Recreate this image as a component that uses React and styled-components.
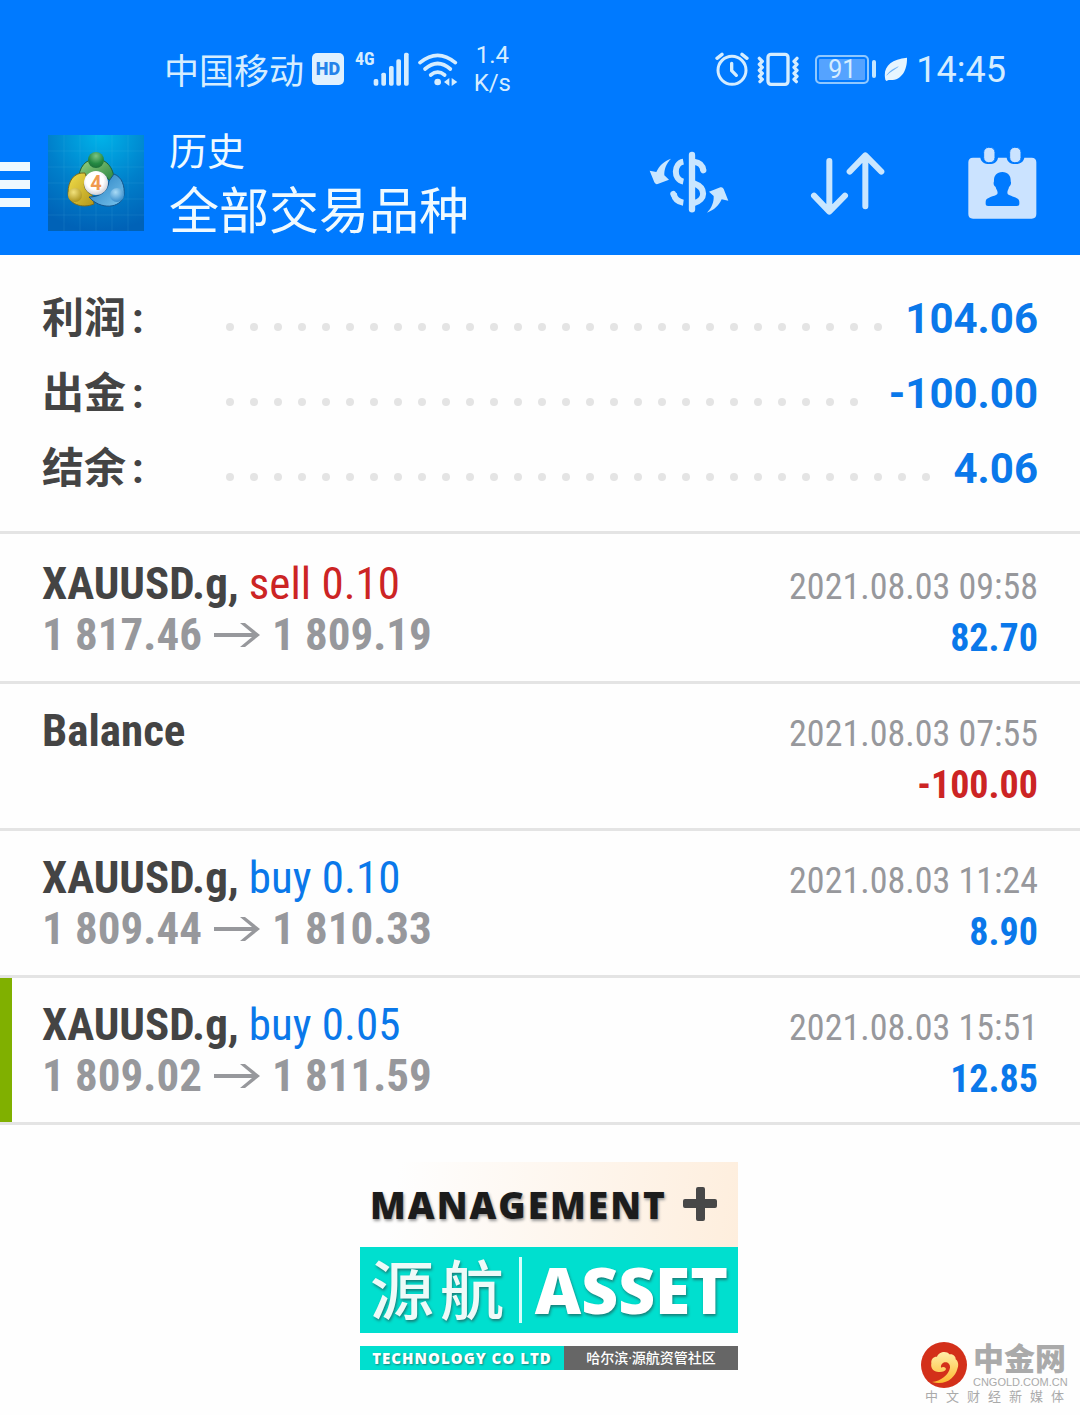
import React from 'react'
import styled, { createGlobalStyle } from 'styled-components'

const summary = [
	{ label: '利润', value: '104.06' },
	{ label: '出金', value: '-100.00' },
	{ label: '结余', value: '4.06' },
]

const deals = [
	{ symbol: 'XAUUSD.g,', type: 'sell', lots: '0.10', open: '1 817.46', close: '1 809.19', time: '2021.08.03 09:58', profit: '82.70' },
	{ symbol: 'Balance', time: '2021.08.03 07:55', profit: '-100.00' },
	{ symbol: 'XAUUSD.g,', type: 'buy', lots: '0.10', open: '1 809.44', close: '1 810.33', time: '2021.08.03 11:24', profit: '8.90' },
	{ symbol: 'XAUUSD.g,', type: 'buy', lots: '0.05', open: '1 809.02', close: '1 811.59', time: '2021.08.03 15:51', profit: '12.85', marked: true },
]

const SignalIcon = () => (
	<svg width="36" height="34" viewBox="668 62 108 102" fill="#d5edff">
		<rect x="670" y="143" width="14" height="20" rx="5" />
		<rect x="693" y="124" width="14" height="39" rx="5" />
		<rect x="716" y="104" width="14" height="59" rx="5" />
		<rect x="738" y="84" width="14" height="79" rx="5" />
		<rect x="761" y="64" width="14" height="99" rx="5" />
	</svg>
)

const WifiIcon = () => (
	<svg width="41" height="34" viewBox="800 60 123 102" fill="none" stroke="#d5edff" strokeWidth="11" strokeLinecap="round">
		<path d="M809 92Q862 48 915 92" />
		<path d="M824 111Q862 78 900 111" />
		<path d="M841 129Q862 112 883 129" />
		<circle cx="862" cy="150" r="10" fill="#d5edff" stroke="none" />
		<path d="M897 138v24l-16-12zM904 138v24l17-12z" fill="#d5edff" stroke="none" />
	</svg>
)

const AlarmIcon = () => (
	<svg width="34" height="34" viewBox="44 64 102 102" fill="none" stroke="#d5edff" strokeWidth="9" strokeLinecap="round">
		<circle cx="95" cy="119" r="42" />
		<path d="M94 98v22l14 14" strokeWidth="10" />
		<path d="M50 83l15-12M140 83l-15-12" strokeWidth="10" />
	</svg>
)

const VibrateIcon = () => (
	<svg width="42" height="34" viewBox="180 64 126 102" fill="none" stroke="#d5edff" strokeWidth="10" strokeLinejoin="round" strokeLinecap="round">
		<rect x="213" y="71" width="60" height="90" rx="9" />
		<path d="M187 83l9 9-9 9 9 9-9 9 9 9-9 9 9 9-7 7" />
		<path d="M300 83l-9 9 9 9-9 9 9 9-9 9 9 9-9 9 7 7" />
	</svg>
)

const LeafIcon = () => (
	<svg width="24" height="26" viewBox="0 0 72 78">
		<path d="M4 71C-4 34 18 10 69 5C70 42 53 76 14 72L7 75Z" fill="#e6f5ff" />
		<path d="M8 58C17 44 30 37 43 32C32 41 19 46 8 58Z" fill="#5da9f5" stroke="#5da9f5" />
	</svg>
)

const CurrencyIcon = () => (
	<svg width="80" height="64" viewBox="60 60 240 192" fill="none" stroke="#c9e6ff" strokeWidth="18">
		<path d="M189 72V235" strokeLinecap="round" strokeWidth="19" />
		<path d="M163 92C134 97 132 146 163 152" />
		<path d="M134 188C137 204 148 213 163 215" />
		<path d="M133 189l1 2" strokeLinecap="round" />
		<path d="M195 92C212 94 221 103 223 118" />
		<path d="M222 116l1 2" strokeLinecap="round" />
		<path d="M195 157C232 170 231 207 195 216" />
		<g fill="#c9e6ff" stroke="none">
			<path d="M126 83C112 97 105 115 106 133L120 146L86 159Q79 161 76 154L62 119L82 123C90 105 105 90 126 83Z" />
			<path d="M126 83C112 97 105 115 106 133L120 146L86 159Q79 161 76 154L62 119L82 123C90 105 105 90 126 83Z" transform="rotate(180 180 164)" />
		</g>
	</svg>
)

const SortIcon = () => (
	<svg width="80" height="64" viewBox="530 60 240 192" fill="none" stroke="#c9e6ff" strokeWidth="18" strokeLinecap="round" strokeLinejoin="round">
		<path d="M594 90V241M548 194L594 242L641 194" />
		<path d="M702 226V74M655 122L702 73L750 122" />
	</svg>
)

const CalendarIcon = () => (
	<svg width="71" height="72" viewBox="1010 48 213 216">
		<path d="M1028 80H1050C1052 92 1062 99 1077 99C1092 99 1101 92 1103 80H1129C1131 92 1140 99 1155 99C1170 99 1180 92 1182 80H1204Q1218 80 1218 94V249Q1218 263 1204 263H1028Q1014 263 1014 249V94Q1014 80 1028 80Z" fill="#cbe3ff" />
		<rect x="1060" y="49" width="34" height="46" rx="15" fill="#cbe3ff" stroke="#007aff" strokeWidth="3" />
		<rect x="1138" y="49" width="34" height="46" rx="15" fill="#cbe3ff" stroke="#007aff" strokeWidth="3" />
		<path d="M1116 123C1134 123 1142 135 1141 151C1144 158 1140 165 1136 168C1135 176 1129 179 1132 189C1140 197 1167 198 1167 212V220Q1167 225 1160 225H1073Q1066 225 1066 220V212C1066 198 1093 197 1101 189C1104 179 1097 176 1096 168C1091 165 1088 158 1091 151C1090 135 1098 123 1116 123Z" fill="#007aff" />
	</svg>
)

const AppLogo = () => (
	<svg width="96" height="96" viewBox="0 0 96 96">
		<defs>
			<radialGradient id="sky" cx=".55" cy="0" r="1">
				<stop offset="0" stopColor="#00b4ea" />
				<stop offset=".55" stopColor="#0080cb" />
				<stop offset="1" stopColor="#0062b7" />
			</radialGradient>
			<linearGradient id="green" x1="0" y1="0" x2="1" y2="1">
				<stop offset="0" stopColor="#9bd486" />
				<stop offset="1" stopColor="#23813b" />
			</linearGradient>
			<linearGradient id="gold" x1="0" y1="0" x2="1" y2="1">
				<stop offset="0" stopColor="#f3df4b" />
				<stop offset="1" stopColor="#b3961a" />
			</linearGradient>
			<linearGradient id="azure" x1="0" y1="0" x2="1" y2="1">
				<stop offset="0" stopColor="#1d78bd" />
				<stop offset="1" stopColor="#7cc6ee" />
			</linearGradient>
			<radialGradient id="greenHead" cx=".5" cy=".25" r=".8">
				<stop offset="0" stopColor="#7cc482" />
				<stop offset=".6" stopColor="#248a43" />
				<stop offset="1" stopColor="#1b6a35" />
			</radialGradient>
			<radialGradient id="goldHead" cx=".4" cy=".3" r=".8">
				<stop offset="0" stopColor="#f2e27c" />
				<stop offset="1" stopColor="#a58a10" />
			</radialGradient>
			<radialGradient id="azureHead" cx=".4" cy=".3" r=".8">
				<stop offset="0" stopColor="#a9dbf6" />
				<stop offset="1" stopColor="#2a83c6" />
			</radialGradient>
			<radialGradient id="ball" cx=".45" cy=".4" r=".6">
				<stop offset=".6" stopColor="#fff" />
				<stop offset="1" stopColor="#cfcfd6" />
			</radialGradient>
		</defs>
		<rect width="96" height="96" fill="url(#sky)" />
		<path d="M0 16H96M0 32H96M0 48H96M0 64H96M0 80H96M16 0V96M32 0V96M48 0V96M64 0V96M80 0V96" stroke="#6cc6f2" strokeOpacity=".12" />
		<path d="M31 46C30 32 38 24 48 24C59 24 67 34 66 48L60 44C56 36 40 36 36 44Z" fill="url(#green)" stroke="#1f5f35" />
		<path d="M37 38C26 37 20 46 20 58C20 69 34 74 46 69L44 60C36 56 34 48 39 44Z" fill="url(#gold)" stroke="#7c6c1c" />
		<path d="M66 39C74 42 77 51 76 60C73 74 52 75 41 62C50 62 60 58 61 46Z" fill="url(#azure)" stroke="#15558b" />
		<circle cx="48" cy="25" r="8" fill="url(#greenHead)" />
		<circle cx="27" cy="60" r="7" fill="url(#goldHead)" />
		<circle cx="69" cy="60" r="7" fill="url(#azureHead)" />
		<circle cx="48" cy="48" r="12" fill="url(#ball)" />
		<text x="48" y="55" textAnchor="middle" fontFamily="Roboto, sans-serif" fontWeight="700" fontSize="20" fill="#f09a4e">4</text>
	</svg>
)

const CloudLogo = () => (
	<svg width="46" height="46" viewBox="15 13 138 138">
		<defs>
			<linearGradient id="flame" x1="0" y1="0" x2="0" y2="1">
				<stop offset="0" stopColor="#ffefaa" />
				<stop offset="1" stopColor="#fdb930" />
			</linearGradient>
		</defs>
		<circle cx="84" cy="82" r="69" fill="#d3301a" />
		<path d="M48 133C74 130 98 112 102 90C103 77 92 71 82 75C76 78 74 84 75 90C80 86 89 87 90 94C89 101 78 104 68 103C53 103 43 92 46 77C44 64 54 56 63 57C68 41 93 38 100 50C112 48 120 57 119 65C127 71 129 83 124 94C118 118 90 146 48 133Z" fill="url(#flame)" />
	</svg>
)

const ArrowIcon = () => (
	<svg width="46" height="26" viewBox="0 0 46 26">
		<path d="M0 11H38L26 1H31L46 13L31 25H26L38 15H0Z" fill="#97989c" />
	</svg>
)

const App = () => (
	<Page>
		<GlobalStyle />
		<Header>
			<StatusBar>
				<StatusGroup>
					<Carrier>中国移动</Carrier>
					<HdBadge>HD</HdBadge>
					<Network>4G</Network>
					<SignalIcon />
					<WifiIcon />
					<Speed>
						<span>1.4</span>
						<span>K/s</span>
					</Speed>
				</StatusGroup>
				<StatusGroup>
					<AlarmIcon />
					<VibrateIcon />
					<Battery>
						<Charge>91</Charge>
					</Battery>
					<LeafIcon />
					<Clock>14:45</Clock>
				</StatusGroup>
			</StatusBar>
			<Toolbar>
				<MenuButton aria-label="菜单">
					<MenuLine />
					<MenuLine />
					<MenuLine />
				</MenuButton>
				<AppLogo />
				<Titles>
					<Subtitle>历史</Subtitle>
					<Title>全部交易品种</Title>
				</Titles>
				<Actions>
					<IconButton aria-label="货币"><CurrencyIcon /></IconButton>
					<IconButton aria-label="排序"><SortIcon /></IconButton>
					<IconButton aria-label="日期"><CalendarIcon /></IconButton>
				</Actions>
			</Toolbar>
		</Header>
		<Summary>
			{summary.map(({ label, value }) => (
				<SummaryRow key={label}>
					<Label>{label}<span>:</span></Label>
					<Dots aria-hidden="true">
						{Array.from({ length: 80 }, (_, i) => <Dot key={i} />)}
					</Dots>
					<Amount>{value}</Amount>
				</SummaryRow>
			))}
		</Summary>
		<Deals>
			{deals.map((deal) => (
				<Deal key={deal.time} $marked={deal.marked}>
					<div>
						<DealTitle>
							<span>{deal.symbol}</span>
							{deal.type && <Side $type={deal.type}>{deal.type} {deal.lots}</Side>}
						</DealTitle>
						{deal.open && (
							<Prices>
								<span>{deal.open}</span>
								<ArrowIcon />
								<span>{deal.close}</span>
							</Prices>
						)}
					</div>
					<DealInfo>
						<Time>{deal.time}</Time>
						<Profit $loss={deal.profit.startsWith('-')}>{deal.profit}</Profit>
					</DealInfo>
				</Deal>
			))}
		</Deals>
		<Footer>
			<Banner>
				<BannerTop>
					MANAGEMENT
					<svg width="38" height="38" viewBox="0 0 38 38">
						<path d="M14 3Q14 1 16 1H21Q23 1 23 3V13H33Q35 13 35 15V20Q35 22 33 22H23V33Q23 35 21 35H16Q14 35 14 33V22H3Q1 22 1 20V15Q1 13 3 13H14Z" fill="#484848" />
					</svg>
				</BannerTop>
				<BannerMain>
					<BrandName>源航</BrandName>
					<BrandAsset>ASSET</BrandAsset>
				</BannerMain>
				<BannerBottom>
					<Company>TECHNOLOGY CO LTD</Company>
					<Community>哈尔滨·源航资管社区</Community>
				</BannerBottom>
			</Banner>
			<Watermark>
				<WatermarkTop>
					<CloudLogo />
					<div>
						<SiteName>中金网</SiteName>
						<SiteUrl>CNGOLD.COM.CN</SiteUrl>
					</div>
				</WatermarkTop>
				<Slogan>中文财经新媒体</Slogan>
			</Watermark>
		</Footer>
	</Page>
)

export default App

const GlobalStyle = createGlobalStyle`
	* {
		box-sizing: border-box;
	}
	body {
		margin: 0;
		background-color: #fefefe;
		font-family: Roboto, 'Noto Sans CJK SC', sans-serif;
	}
	svg {
		display: block;
		flex-shrink: 0;
	}
`

const Page = styled.div`
	min-height: 100vh;
`

const Header = styled.header`
	background-color: #007aff;
	color: #d5edff;
	padding: 30px 0 9px;
`

const StatusBar = styled.div`
	display: flex;
	justify-content: space-between;
	align-items: center;
	height: 78px;
	padding: 0 74px 0 164px;
`

const StatusGroup = styled.div`
	display: flex;
	align-items: center;
	gap: 8px;
`

const Carrier = styled.span`
	padding-top: 8px;
	font-size: 35px;
	line-height: 40px;
`

const HdBadge = styled.span`
	width: 32px;
	height: 32px;
	border-radius: 5px;
	background-color: #e0f1ff;
	color: #2583ea;
	font-size: 18px;
	font-weight: 900;
	line-height: 32px;
	text-align: center;
`

const Network = styled.span`
	margin: 0 -10px 0 3px;
	padding-bottom: 20px;
	font-family: 'Roboto Condensed', 'Liberation Sans Narrow', sans-serif;
	font-size: 18px;
	font-weight: 700;
	line-height: 20px;
`

const Speed = styled.span`
	display: flex;
	flex-direction: column;
	align-items: center;
	padding-left: 8px;
	font-size: 24px;
	line-height: 28px;
`

const Battery = styled.span`
	display: flex;
	align-items: center;
	margin-left: 8px;
	&::after {
		content: '';
		width: 4px;
		height: 18px;
		margin-left: 3px;
		border-radius: 2px;
		background-color: #c5e6ff;
	}
`

const Charge = styled.span`
	width: 54px;
	height: 29px;
	border: 2px solid #8fc8ff;
	border-radius: 5px;
	background-color: #55a3ff;
	box-shadow: inset 0 0 0 2px #007aff;
	font-size: 25px;
	line-height: 26px;
	text-align: center;
`

const Clock = styled.span`
	padding-top: 2px;
	font-size: 36px;
	line-height: 40px;
`

const Toolbar = styled.div`
	display: flex;
	align-items: center;
	padding: 12px 42px 0 0;
`

const MenuButton = styled.button`
	display: flex;
	flex-direction: column;
	gap: 9px;
	width: 48px;
	padding: 3px 0 0;
	border: 0;
	background: none;
`

const MenuLine = styled.span`
	width: 30px;
	height: 9px;
	background-color: #eef9ff;
`

const Titles = styled.div`
	flex: 1;
	padding: 6px 0 0 25px;
	color: #f0faff;
`

const Subtitle = styled.div`
	font-size: 38px;
	line-height: 52px;
`

const Title = styled.h1`
	margin: 0;
	font-size: 50px;
	font-weight: 400;
	line-height: 68px;
`

const Actions = styled.div`
	display: flex;
	align-items: center;
	gap: 79px;
`

const IconButton = styled.button`
	padding: 0;
	border: 0;
	background: none;
`

const Summary = styled.dl`
	margin: 0;
	padding: 26px 42px 25px;
	border-bottom: 3px solid #e4e4e4;
`

const SummaryRow = styled.div`
	display: flex;
	align-items: center;
	height: 75px;
`

const Label = styled.dt`
	display: flex;
	gap: 6px;
	width: 176px;
	color: #444;
	font-size: 42px;
	font-weight: 700;
	line-height: 50px;
`

const Dots = styled.dd`
	display: flex;
	flex: 1;
	flex-wrap: wrap;
	height: 8px;
	margin: 16px 8px 0 0;
	overflow: hidden;
`

const Dot = styled.span`
	width: 8px;
	height: 8px;
	margin: 0 8px;
	border-radius: 50%;
	background-color: #e4e4e4;
`

const Amount = styled.dd`
	margin: 0;
	color: #0a78ea;
	font-size: 42px;
	font-weight: 700;
	line-height: 50px;
`

const Deals = styled.ul`
	margin: 0;
	padding: 3px 0 0;
	list-style: none;
	font-family: 'Roboto Condensed', 'Liberation Sans Narrow', sans-serif;
`

const Deal = styled.li`
	display: flex;
	justify-content: space-between;
	height: 147px;
	padding: 21px 42px 0;
	border-bottom: 3px solid #e4e4e4;
	box-shadow: ${({ $marked }) => ($marked ? 'inset 12px 0 #80b000' : 'none')};
`

const DealTitle = styled.div`
	display: flex;
	gap: 10px;
	color: #444;
	font-size: 45px;
	font-weight: 700;
	line-height: 51px;
`

const Side = styled.span`
	color: ${({ $type }) => ($type === 'sell' ? '#cc2424' : '#0a78ea')};
	font-weight: 400;
`

const Prices = styled.div`
	display: flex;
	align-items: center;
	gap: 12px;
	color: #97989c;
	font-size: 45px;
	font-weight: 700;
	line-height: 51px;
`

const DealInfo = styled.div`
	padding-top: 4px;
	text-align: right;
	line-height: 51px;
`

const Time = styled.div`
	color: #97989c;
	font-size: 36px;
`

const Profit = styled.div`
	color: ${({ $loss }) => ($loss ? '#cc2424' : '#0a78ea')};
	font-size: 38px;
	font-weight: 700;
`

const Footer = styled.footer`
	display: grid;
	grid-template-columns: 1fr 378px 1fr;
	padding: 37px 8px 10px 26px;
`

const Banner = styled.div`
	grid-column: 2;
	font-family: 'Open Sans', 'Noto Sans CJK SC', sans-serif;
`

const BannerTop = styled.div`
	display: flex;
	align-items: center;
	justify-content: space-between;
	height: 85px;
	padding: 0 18px 0 10px;
	background: linear-gradient(100deg, #fefefe 10%, #feeedd);
	color: #1c1c1c;
	font-size: 37px;
	font-weight: 800;
	letter-spacing: 2px;
	text-shadow: 1px 2px 3px #999;
`

const BannerMain = styled.div`
	display: flex;
	align-items: center;
	height: 86px;
	padding: 0 10px;
	background-color: #00dfcf;
	color: #fff;
	text-shadow: 1px 2px 3px #16807a;
`

const BrandName = styled.span`
	padding-right: 9px;
	border-right: 3px solid #d6fffb;
	color: #eefaf8;
	font-size: 64px;
	font-weight: 500;
	line-height: 66px;
	letter-spacing: 6px;
`

const BrandAsset = styled.span`
	flex: 1;
	text-align: right;
	font-size: 64px;
	font-weight: 800;
	line-height: 66px;
`

const BannerBottom = styled.div`
	display: flex;
	height: 24px;
	margin-top: 13px;
	color: #fff;
	line-height: 24px;
	text-align: center;
`

const Company = styled.span`
	width: 204px;
	background-color: #00dfcf;
	font-size: 15px;
	font-weight: 800;
	letter-spacing: 1px;
	text-shadow: 1px 1px 2px #16807a;
`

const Community = styled.span`
	flex: 1;
	background-color: #666;
	font-size: 14px;
	font-weight: 500;
`

const Watermark = styled.div`
	justify-self: end;
	align-self: end;
	margin-top: 180px;
	color: #aaa;
`

const WatermarkTop = styled.div`
	display: flex;
	align-items: center;
	gap: 6px;
`

const SiteName = styled.div`
	font-size: 31px;
	font-weight: 900;
	line-height: 34px;
`

const SiteUrl = styled.div`
	font-family: 'Liberation Sans', sans-serif;
	font-size: 11px;
	line-height: 11px;
`

const Slogan = styled.div`
	padding-left: 4px;
	font-size: 13px;
	line-height: 18px;
	letter-spacing: 8px;
`
